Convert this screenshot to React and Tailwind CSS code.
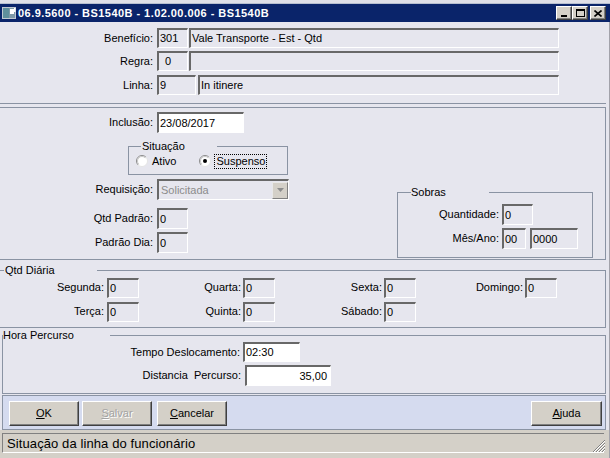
import React from 'react';

const line = 'border-[#8a93a3]';

function Box({ w, h = 'h-[20px]', white, right, pad = 'pl-[1px]', children, className = '' }) {
  return (
    <div
      className={`${w} ${h} shrink-0 flex items-center overflow-hidden whitespace-nowrap border-t-2 border-l-2 border-t-[#686868] border-l-[#686868] border-b border-r border-b-white border-r-white ${white ? 'bg-white' : 'bg-[#e6e6ee]'} ${right ? 'justify-end pr-[3px]' : pad} ${className}`}
    >
      {children}
    </div>
  );
}

function Radio({ checked }) {
  return (
    <svg width="12" height="12" viewBox="0 0 12 12" className="shrink-0">
      <circle cx="6" cy="6" r="5.5" fill="#fff" />
      <path d="M2.1 9.9 A5.5 5.5 0 0 1 9.9 2.1" stroke="#8c8c8c" fill="none" />
      <path d="M9.9 2.1 A5.5 5.5 0 0 1 2.1 9.9" stroke="#e4e4e4" fill="none" />
      <path d="M2.8 9.2 A4.5 4.5 0 0 1 9.2 2.8" stroke="#c8c8c8" fill="none" />
      {checked && <circle cx="6" cy="6" r="2" fill="#000" />}
    </svg>
  );
}

function Btn({ children, disabled, u, className = '' }) {
  return (
    <div
      className={`w-[70px] h-[25px] shrink-0 bg-[#d4d0c8] border border-t-white border-l-white border-b-[#404040] border-r-[#404040] shadow-[inset_-1px_-1px_0_#808080] flex items-center justify-center ${disabled ? 'text-[#a3a3a3] [text-shadow:1px_1px_0_#fff]' : 'text-black'} ${className}`}
    >
      <span className="underline">{u}</span>
      {children}
    </div>
  );
}

function TitleBtn({ children }) {
  return (
    <div className="w-[16px] h-[14px] bg-[#d4d0c8] border border-t-white border-l-white border-b-[#404040] border-r-[#404040] shadow-[inset_-1px_-1px_0_#808080] flex items-center justify-center">
      {children}
    </div>
  );
}

function Cell({ w, label, gap = 'gap-[2px]', value }) {
  return (
    <div className={`${w} shrink-0 flex items-center justify-end ${gap}`}>
      <span>{label}</span>
      <Box w="w-[32px]">{value}</Box>
    </div>
  );
}

export default function App() {
  return (
    <div className="w-[610px] h-[458px] overflow-hidden bg-[#e6e6ee] font-['Liberation_Sans',Arial,sans-serif] text-[11px] leading-[13px] text-black flex flex-col">
      {/* top strip + title bar */}
      <div className="h-[4px] bg-[#dfe0e8] border-b border-[#b7bfd0]" />
      <div className="h-[18px] bg-[#0a246a] flex items-center pl-[2px] pr-[4px]">
        <svg width="14" height="12" viewBox="0 0 14 12" className="shrink-0">
          <rect x="0.5" y="0.5" width="13" height="11" fill="#7f9aa8" stroke="#c0c8d0" />
          <rect x="1" y="1" width="6" height="10" fill="#5f8f9c" />
          <rect x="8" y="2" width="4" height="5" fill="#fff" />
          <rect x="12" y="1" width="1.5" height="4" fill="#fff" />
        </svg>
        <span className="ml-[2px] text-white font-bold tracking-[0.45px] whitespace-nowrap">
          06.9.5600 - BS1540B - 1.02.00.006 - BS1540B
        </span>
        <div className="ml-auto flex items-center">
          <TitleBtn>
            <div className="w-[6px] h-[2px] bg-black mt-[6px]" />
          </TitleBtn>
          <TitleBtn>
            <div className="w-[9px] h-[8px] border border-black border-t-2" />
          </TitleBtn>
          <div className="w-[2px]" />
          <TitleBtn>
            <svg width="8" height="7" viewBox="0 0 8 7">
              <path d="M0.5 0.5 L7.5 6.5 M7.5 0.5 L0.5 6.5" stroke="#000" strokeWidth="1.6" />
            </svg>
          </TitleBtn>
        </div>
      </div>

      <div className="flex-1 flex flex-col border-r border-r-[#a2a2aa]">
        {/* panel 1 */}
        <div className={`h-[82px] w-[606px] border-b ${line} pt-[6px] flex flex-col`}>
          <div className="flex items-center h-[20px]">
            <span className="w-[153px] text-right">Benefício:</span>
            <Box w="w-[31px]" className="ml-[4px]">301</Box>
            <Box w="w-[370px]" className="ml-[1px]">Vale Transporte - Est - Qtd</Box>
          </div>
          <div className="flex items-center h-[20px] mt-[3px]">
            <span className="w-[153px] text-right">Regra:</span>
            <Box w="w-[31px]" pad="pl-[6px]" className="ml-[4px]">0</Box>
            <Box w="w-[370px]" className="ml-[1px]"></Box>
          </div>
          <div className="flex items-center h-[20px] mt-[4px]">
            <span className="w-[153px] text-right">Linha:</span>
            <Box w="w-[39px]" className="ml-[4px]">9</Box>
            <Box w="w-[361px]" className="ml-[2px]">In itinere</Box>
          </div>
        </div>

        {/* panel 2 */}
        <div className={`mt-[3px] h-[153px] w-[606px] border-t border-b border-r ${line} flex`}>
          <div className="w-[397px] shrink-0 pt-[4px] flex flex-col">
            <div className="flex items-center">
              <span className="w-[153px] text-right">Inclusão:</span>
              <Box w="w-[87px]" h="h-[21px]" white className="ml-[4px]">23/08/2017</Box>
            </div>
            <fieldset className={`ml-[128px] mt-[7px] w-[160px] border ${line} pl-[7px] pb-[5px]`}>
              <legend className="ml-[5px] w-[76px] pl-[1px] leading-[13px]">Situação</legend>
              <div className="h-[16px] flex items-center">
                <Radio />
                <span className="ml-[4px]">Ativo</span>
                <div className="ml-[23px]">
                  <Radio checked />
                </div>
                <span className="ml-[3px] px-[1px] border border-dotted border-black leading-[13px]">Suspenso</span>
              </div>
            </fieldset>
            <div className="flex items-center mt-[4px]">
              <span className="w-[153px] text-right">Requisição:</span>
              <div className="ml-[4px] w-[132px] h-[21px] border-t-2 border-l-2 border-t-[#686868] border-l-[#686868] border-b border-r border-b-white border-r-white flex items-center pl-[2px]">
                <span className="text-[#8c8c8c] flex-1">Solicitada</span>
                <div className="w-[16px] h-[17px] bg-[#d4d0c8] border border-t-[#e8e8e8] border-l-[#e8e8e8] border-b-[#808080] border-r-[#808080] flex items-center justify-center">
                  <svg width="7" height="4" viewBox="0 0 7 4">
                    <path d="M0 0 H7 L3.5 4 Z" fill="#8c8c8c" />
                  </svg>
                </div>
              </div>
            </div>
            <div className="flex items-center mt-[8px]">
              <span className="w-[153px] text-right">Qtd Padrão:</span>
              <Box w="w-[31px]" h="h-[21px]" className="ml-[4px]">0</Box>
            </div>
            <div className="flex items-center mt-[3px]">
              <span className="w-[153px] text-right">Padrão Dia:</span>
              <Box w="w-[31px]" h="h-[21px]" className="ml-[4px]">0</Box>
            </div>
          </div>
          <fieldset className={`self-end mb-[1px] w-[196px] border ${line} pb-[8px]`}>
            <legend className="ml-[13px] w-[78px] leading-[13px]">Sobras</legend>
            <div className="flex items-center mt-[5px]">
              <span className="w-[101px] text-right">Quantidade:</span>
              <Box w="w-[31px]" h="h-[21px]" className="ml-[3px]">0</Box>
            </div>
            <div className="flex items-center mt-[3px]">
              <span className="w-[101px] text-right">Mês/Ano:</span>
              <Box w="w-[24px]" h="h-[21px]" className="ml-[3px]">00</Box>
              <Box w="w-[48px]" h="h-[21px]" className="ml-[4px]">0000</Box>
            </div>
          </fieldset>
        </div>

        {/* Qtd Diária */}
        <fieldset className={`mt-[4px] w-[606px] border border-l-0 ${line} pb-[5px]`}>
          <legend className="ml-[4px] w-[93px] pl-[1px] leading-[13px]">Qtd Diária</legend>
          <div className="flex h-[21px]">
            <Cell w="w-[139px]" gap="gap-[3px]" label="Segunda:" value="0" />
            <Cell w="w-[136px]" label="Quarta:" value="0" />
            <Cell w="w-[141px]" label="Sexta:" value="0" />
            <Cell w="w-[141px]" label="Domingo:" value="0" />
          </div>
          <div className="flex h-[21px] mt-[3px]">
            <Cell w="w-[139px]" gap="gap-[3px]" label="Terça:" value="0" />
            <Cell w="w-[136px]" label="Quinta:" value="0" />
            <Cell w="w-[141px]" label="Sábado:" value="0" />
          </div>
        </fieldset>

        {/* Hora Percurso */}
        <fieldset className={`mt-[1px] ml-[2px] w-[604px] border ${line} pb-[7px]`}>
          <legend className="w-[107px] leading-[13px]">Hora Percurso</legend>
          <div className="flex items-center">
            <span className="w-[237px] text-right">Tempo Deslocamento:</span>
            <Box w="w-[57px]" white className="ml-[3px]">02:30</Box>
          </div>
          <div className="flex items-center mt-[3px]">
            <span className="w-[238px] text-right whitespace-pre">Distancia  Percurso:</span>
            <Box w="w-[86px]" h="h-[21px]" white right className="ml-[4px]">35,00</Box>
          </div>
        </fieldset>

        {/* buttons */}
        <div className={`mt-[1px] ml-[2px] w-[604px] h-[35px] bg-[#d5dbef] border ${line} flex items-start pt-[5px] pl-[6px] pr-[3px]`}>
          <Btn u="O">K</Btn>
          <Btn u="S" disabled className="ml-[3px] w-[69px]">alvar</Btn>
          <Btn u="C" className="ml-[5px]">ancelar</Btn>
          <Btn u="A" className="ml-auto w-[71px]">juda</Btn>
        </div>

        {/* status bar */}
        <div className="flex-1 bg-[#d4d0c8] pt-[3px] pl-[2px] pr-[5px]">
          <div className="relative h-[20px] border-t border-l border-t-[#808080] border-l-[#808080] border-b border-b-white flex items-center pl-[4px] text-[13px] tracking-[0.1px]">
            Situação da linha do funcionário
            <svg width="14" height="14" viewBox="0 0 14 14" className="absolute right-[-2px] bottom-[-1px]">
              <path d="M13 1 L1 13 M13 4 L4 13 M13 7 L7 13 M13 10 L10 13" stroke="#808080" strokeWidth="1" />
              <path d="M13 2 L2 13 M13 5 L5 13 M13 8 L8 13 M13 11 L11 13" stroke="#ffffff" strokeWidth="1" />
            </svg>
          </div>
        </div>
      </div>
    </div>
  );
}
